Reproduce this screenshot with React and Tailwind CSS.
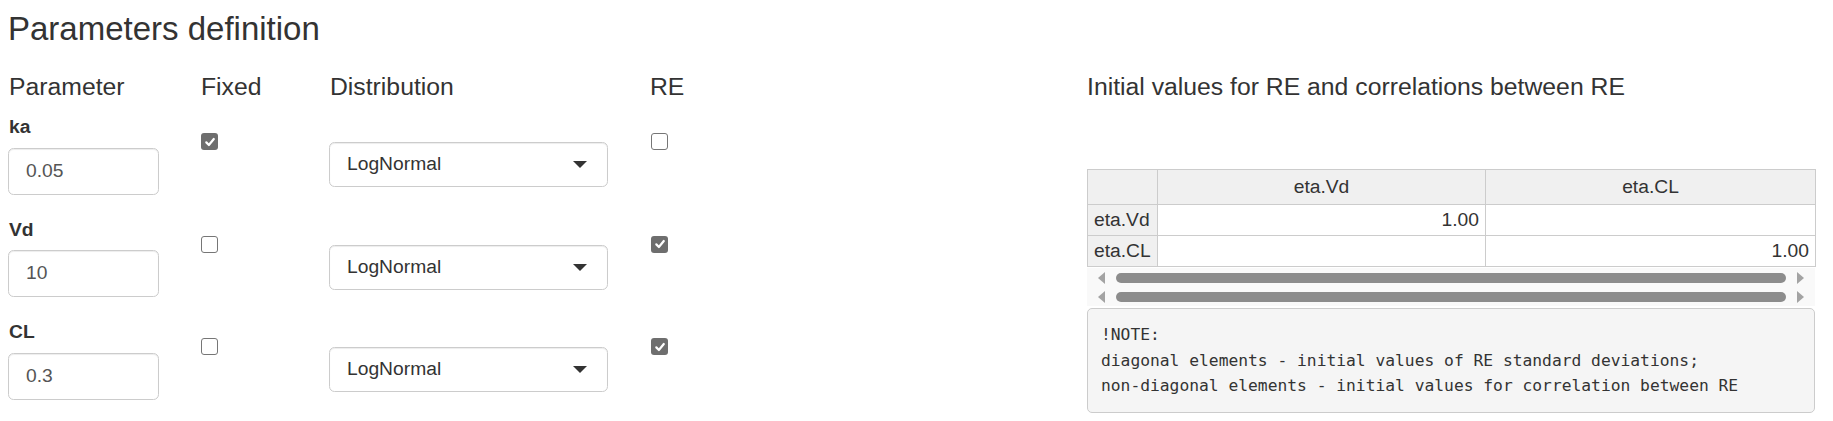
const params = [
  { name: 'ka', value: '0.05', fixed: true, re: false },
  { name: 'Vd', value: '10', fixed: false, re: true },
  { name: 'CL', value: '0.3', fixed: false, re: true },
];

function Check({ checked }) {
  if (checked) {
    return (
      <span className="flex h-[17px] w-[17px] items-center justify-center rounded-[3px] bg-[#6e6e6e]">
        <svg viewBox="0 0 12 12" className="h-[12px] w-[12px]">
          <path d="M2.3 6.4 L4.9 9 L9.8 3" fill="none" stroke="#fff" strokeWidth="2.2" strokeLinecap="round" strokeLinejoin="round" />
        </svg>
      </span>
    );
  }
  return <span className="block h-[17px] w-[17px] rounded-[3px] border-[1.5px] border-[#767676] bg-white" />;
}

function ScrollTrack() {
  return (
    <div className="flex h-[19px] items-center bg-[#f9f9f9] px-[11px]">
      <svg viewBox="0 0 8 12" className="h-[12px] w-[8px]">
        <path d="M7 0 L0 6 L7 12 Z" fill="#a3a3a3" />
      </svg>
      <div className="mx-[10px] h-[10px] flex-1 rounded-full bg-[#8c8c8c]" />
      <svg viewBox="0 0 8 12" className="h-[12px] w-[8px]">
        <path d="M1 0 L8 6 L1 12 Z" fill="#a3a3a3" />
      </svg>
    </div>
  );
}

export default function App() {
  return (
    <div className="min-h-screen bg-white pl-[8px] font-['Liberation_Sans',Arial,sans-serif] text-[#333]">
      <h3 className="pt-[11px] text-[33px] leading-[36px]">Parameters definition</h3>

      <div className="mt-[26px] flex">
        <div className="w-[1079px]">
          <div className="grid h-[27px] grid-cols-[192px_129px_321px_1fr] text-[24.75px] leading-[27px]">
            <h4 className="pl-[1px]">Parameter</h4>
            <h4 className="pl-[1px]">Fixed</h4>
            <h4 className="pl-[1px]">Distribution</h4>
            <h4>RE</h4>
          </div>

          <div className="mt-[13px]">
            {params.map(p => (
              <div key={p.name} className="grid h-[102.5px] grid-cols-[192px_129px_321px_1fr]">
                <div>
                  <label className="block h-[27.5px] pl-[1px] text-[19.25px] font-bold leading-[27.5px]">{p.name}</label>
                  <div className="mt-[7px] flex h-[47px] w-[151px] items-center rounded-[5.5px] border border-[#ccc] px-[17px] text-[19.25px] text-[#555] shadow-[inset_0_1px_1px_rgba(0,0,0,0.075)]">
                    {p.value}
                  </div>
                </div>
                <div className="ml-[1px] mt-[20px]">
                  <Check checked={p.fixed} />
                </div>
                <div className="mt-[29px]">
                  <div className="flex h-[45px] w-[279px] items-center justify-between rounded-[5.5px] border border-[#ccc] pl-[17px] pr-[20px] text-[19.25px] shadow-[inset_0_1px_1px_rgba(0,0,0,0.075)]">
                    <span>LogNormal</span>
                    <svg viewBox="0 0 14 7" className="h-[7px] w-[14px]">
                      <path d="M0 0 L14 0 L7 7 Z" fill="#333" />
                    </svg>
                  </div>
                </div>
                <div className="ml-[1px] mt-[20px]">
                  <Check checked={p.re} />
                </div>
              </div>
            ))}
          </div>
        </div>

        <div className="w-[728px]">
          <h4 className="h-[27px] text-[24.75px] leading-[27px]">Initial values for RE and correlations between RE</h4>

          <table className="mt-[69px] w-[728px] table-fixed border-collapse text-[19.25px]">
            <colgroup>
              <col className="w-[70px]" />
              <col className="w-[328px]" />
              <col className="w-[330px]" />
            </colgroup>
            <thead>
              <tr className="h-[35px] bg-[#f0f0f0]">
                <th className="border border-[#ccc] font-normal"></th>
                <th className="border border-[#ccc] text-center font-normal">eta.Vd</th>
                <th className="border border-[#ccc] text-center font-normal">eta.CL</th>
              </tr>
            </thead>
            <tbody>
              <tr className="h-[31px]">
                <td className="border border-[#ccc] bg-[#f0f0f0] px-[6px]">eta.Vd</td>
                <td className="border border-[#ccc] px-[6px] text-right">1.00</td>
                <td className="border border-[#ccc] px-[6px] text-right"></td>
              </tr>
              <tr className="h-[31px]">
                <td className="border border-[#ccc] bg-[#f0f0f0] px-[6px]">eta.CL</td>
                <td className="border border-[#ccc] px-[6px] text-right"></td>
                <td className="border border-[#ccc] px-[6px] text-right">1.00</td>
              </tr>
            </tbody>
          </table>

          <div className="mt-[1px]">
            <ScrollTrack />
            <ScrollTrack />
          </div>

          <pre className="mt-[2px] rounded-[5px] border border-[#ccc] bg-[#f5f5f5] p-[13px] font-['DejaVu_Sans_Mono',monospace] text-[16.3px] leading-[25.7px] text-[#333]">
{`!NOTE:
diagonal elements - initial values of RE standard deviations;
non-diagonal elements - initial values for correlation between RE`}
          </pre>
        </div>
      </div>
    </div>
  );
}
